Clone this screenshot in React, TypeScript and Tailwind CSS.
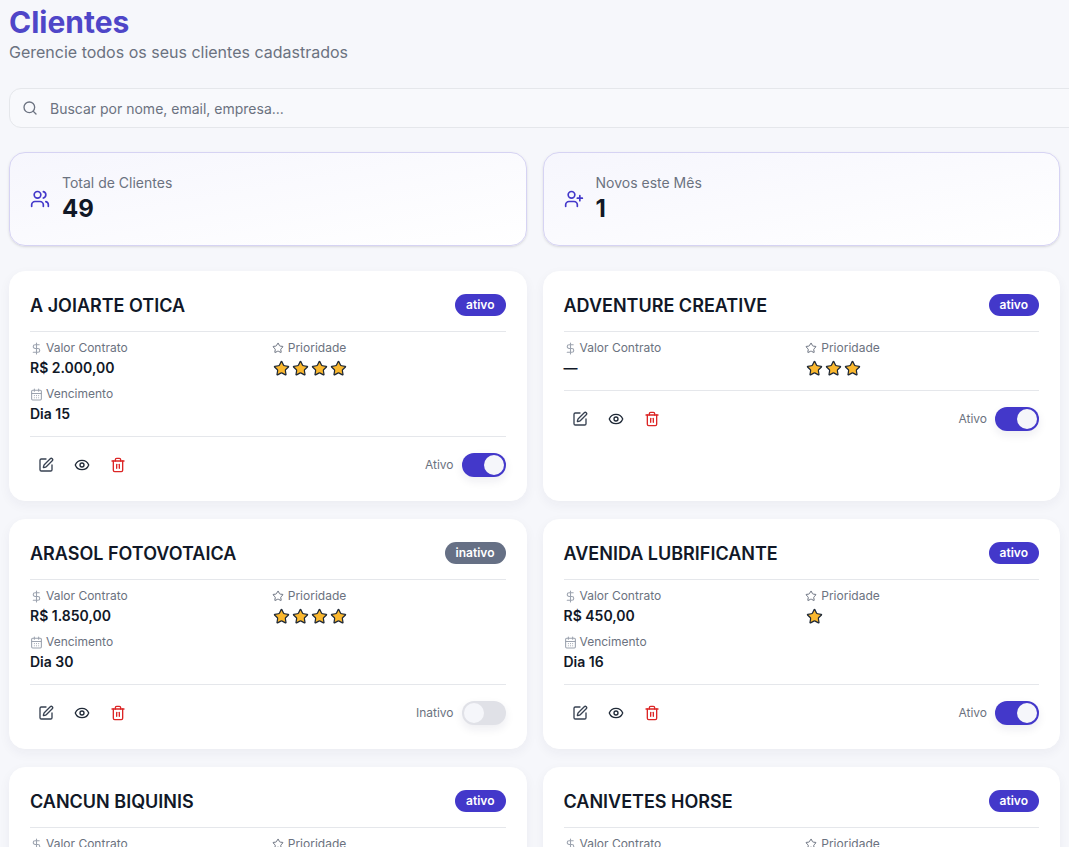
import React from "react";
import { Search, Users, UserPlus, DollarSign, Star, CalendarDays, SquarePen, Eye, Trash2 } from "lucide-react";
import { clsx } from "clsx";

type Client = {
  name: string;
  active: boolean;
  value: string;
  stars: number;
  due?: string;
};

const clients: Client[] = [
  { name: "A JOIARTE OTICA", active: true, value: "R$ 2.000,00", stars: 4, due: "Dia 15" },
  { name: "ADVENTURE CREATIVE", active: true, value: "—", stars: 3 },
  { name: "ARASOL FOTOVOTAICA", active: false, value: "R$ 1.850,00", stars: 4, due: "Dia 30" },
  { name: "AVENIDA LUBRIFICANTE", active: true, value: "R$ 450,00", stars: 1, due: "Dia 16" },
  { name: "CANCUN BIQUINIS", active: true, value: "R$ 900,00", stars: 4, due: "Dia 10" },
  { name: "CANIVETES HORSE", active: true, value: "R$ 700,00", stars: 3, due: "Dia 10" },
];

function StatCard({ icon, label, value }: { icon: React.ReactNode; label: string; value: string }) {
  return (
    <div className="flex h-[94px] items-center gap-[12px] rounded-2xl border border-[#d6d3f3] bg-gradient-to-br from-[#f6f6fd] to-white px-[20px] shadow-sm">
      {icon}
      <div>
        <div className="mb-[2px] text-sm leading-[18px] text-[#6b7280]">{label}</div>
        <div className="text-2xl leading-[30px] font-bold text-[#111827]">{value}</div>
      </div>
    </div>
  );
}

function ClientCard({ client }: { client: Client }) {
  return (
    <div className="rounded-2xl border border-white bg-white px-[20px] pt-[19px] pb-[19px] shadow-[0_4px_12px_rgba(30,30,80,0.05)]">
      <div className="flex h-[28px] items-center justify-between">
        <h3 className="pt-[1px] text-lg leading-7 font-semibold text-[#111827]">{client.name}</h3>
        <span
          className={clsx(
            "rounded-full px-[11px] text-xs leading-[22px] font-semibold text-white",
            client.active ? "bg-[#4338ca]" : "bg-[#667085]"
          )}
        >
          {client.active ? "ativo" : "inativo"}
        </span>
      </div>
      <div className="mt-[12px] grid grid-cols-2 gap-x-[8px] gap-y-[8px] border-t border-[#e5e7eb] pt-[8px]">
        <div>
          <div className="flex h-[16px] items-center gap-[3px] text-xs text-[#6b7280]">
            <DollarSign size={13} className="text-[#9ca3af]" /> Valor Contrato
          </div>
          <div className="mt-[2px] text-sm leading-5 font-semibold text-[#111827]">{client.value}</div>
        </div>
        <div>
          <div className="flex h-[16px] items-center gap-[4px] text-xs text-[#6b7280]">
            <Star size={12} className="text-[#6b7280]" /> Prioridade
          </div>
          <div className="mt-[2px] flex h-[20px] items-center gap-[2px] pl-[1px]">
            {Array.from({ length: client.stars }).map((_, i) => (
              <Star key={i} size={17} fill="#fbb82e" strokeWidth={1.75} className="text-[#1f2937]" />
            ))}
          </div>
        </div>
        {client.due && (
          <div>
            <div className="flex h-[16px] items-center gap-[3px] text-xs text-[#6b7280]">
              <CalendarDays size={13} className="text-[#9ca3af]" /> Vencimento
            </div>
            <div className="mt-[2px] text-sm leading-5 font-semibold text-[#111827]">{client.due}</div>
          </div>
        )}
      </div>
      <div className="mt-[12px] flex items-center justify-between border-t border-[#e5e7eb] pt-[12px]">
        <div className="flex items-center gap-[4px]">
          <button className="flex h-[32px] w-[32px] items-center justify-center text-[#374151]">
            <SquarePen size={16} />
          </button>
          <button className="flex h-[32px] w-[32px] items-center justify-center text-[#1f2937]">
            <Eye size={16} />
          </button>
          <button className="flex h-[32px] w-[32px] items-center justify-center text-[#dc2626]">
            <Trash2 size={16} />
          </button>
        </div>
        <div className="flex items-center gap-[8px]">
          <span className="text-xs text-[#6b7280]">{client.active ? "Ativo" : "Inativo"}</span>
          <div
            className={clsx(
              "flex h-[24px] w-[44px] items-center rounded-full p-[2px] shadow-[0_4px_10px_rgba(30,30,80,0.08)]",
              client.active ? "justify-end bg-[#4338ca]" : "justify-start bg-[#e0e1e7]"
            )}
          >
            <div className="h-[20px] w-[20px] rounded-full bg-[#f5f6fa]" />
          </div>
        </div>
      </div>
    </div>
  );
}

export default function App() {
  return (
    <div className="h-[847px] w-[1069px] overflow-hidden bg-[#f6f7fb] pl-[9px] font-['Inter',sans-serif]">
      <div className="w-[1051px]">
        <h1 className="pt-[4px] text-3xl leading-9 font-bold text-[#4f46c8]">Clientes</h1>
        <p className="text-base leading-6 text-[#6b7280]">Gerencie todos os seus clientes cadastrados</p>
        <div className="mt-[24px] flex h-[40px] w-[1100px] items-center gap-[12px] rounded-xl border border-[#e5e7eb] bg-[#f8f9fc] pl-[12px]">
          <Search size={16} className="text-[#6b7280]" />
          <span className="pt-[1px] text-sm text-[#6b7280]">Buscar por nome, email, empresa...</span>
        </div>
        <div className="mt-[24px] grid grid-cols-2 gap-[16px]">
          <StatCard icon={<Users size={20} className="text-[#4338ca]" />} label="Total de Clientes" value="49" />
          <StatCard icon={<UserPlus size={20} className="text-[#4338ca]" />} label="Novos este Mês" value="1" />
        </div>
        <div className="mt-[25px] grid grid-cols-2 gap-x-[16px] gap-y-[18px]">
          {clients.map((c) => (
            <ClientCard key={c.name} client={c} />
          ))}
        </div>
      </div>
    </div>
  );
}
